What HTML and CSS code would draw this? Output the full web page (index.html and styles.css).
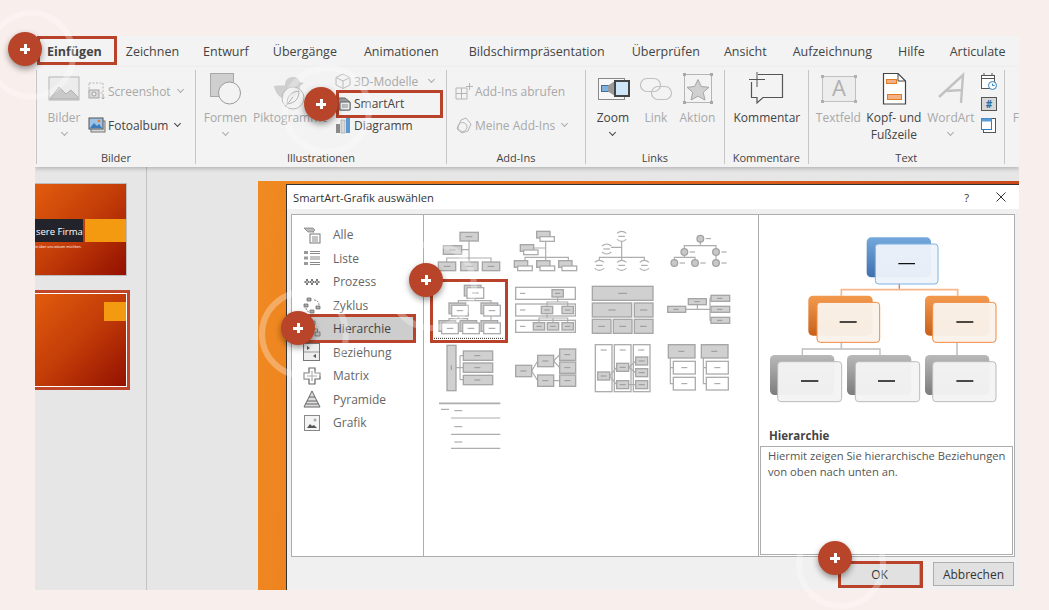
FILE: index.html
```html
<!DOCTYPE html>
<html lang="de">
<head>
<meta charset="UTF-8">
<meta name="viewport" content="width=device-width, initial-scale=1.0">
<title>SmartArt einfügen</title>
<link rel="stylesheet" href="styles.css">
</head>
<body>
<div class="page">
<div class="window">
  <div class="tabs">
    <span class="tab tab-active">Einfügen</span>
    <span class="tab">Zeichnen</span>
    <span class="tab">Entwurf</span>
    <span class="tab">Übergänge</span>
    <span class="tab">Animationen</span>
    <span class="tab">Bildschirmpräsentation</span>
    <span class="tab">Überprüfen</span>
    <span class="tab">Ansicht</span>
    <span class="tab">Aufzeichnung</span>
    <span class="tab">Hilfe</span>
    <span class="tab">Articulate</span>
  </div>

  <div class="ribbon">
    <div class="group group-bilder">
      <div class="group-body">
        <div class="big off w-bilder">
          <svg width="32" height="36" viewBox="0 0 32 36"><rect x="1" y="4" width="30" height="23" fill="#ececec" stroke="#b5b5b5"/><path d="M2 26 L11 14 L18 21 L23 17 L30 24 V26 Z" fill="#c9c9c9" stroke="#b0b0b0"/></svg>
          <span>Bilder</span>
          <i class="chev"></i>
        </div>
        <div class="stack stack-low">
          <div class="row off"><svg width="18" height="18" viewBox="0 0 18 18"><rect x="1" y="1" width="14" height="10" fill="none" stroke="#b5b5b5" stroke-dasharray="2 1.5"/><rect x="1" y="8" width="10" height="8" fill="#d8d8d8" stroke="#a8a8a8"/><circle cx="6" cy="12" r="2" fill="#f3f3f3" stroke="#a0a0a0"/><path d="M15 12v5M13.5 15.5 15 17l1.5-1.5" fill="none" stroke="#a8a8a8"/></svg><span>Screenshot</span><i class="chev"></i></div>
          <div class="row"><svg width="18" height="18" viewBox="0 0 18 18"><rect x="3" y="5" width="14" height="11" fill="#d8d8d8" stroke="#777"/><rect x="1" y="2" width="14" height="11" fill="#9cc3e6" stroke="#555"/><path d="M2 12 6 7l3 3 2-2 3 4Z" fill="#3d7ab8"/><circle cx="11" cy="5" r="1.3" fill="#e8792b"/></svg><span>Fotoalbum</span><i class="chev chev-dark"></i></div>
        </div>
      </div>
      <div class="group-label">Bilder</div>
    </div>

    <div class="group group-illu">
      <div class="group-body">
        <div class="big off w-formen">
          <svg width="43" height="36" viewBox="0 0 43 36"><rect x="6.5" y="0.5" width="23" height="23" fill="#cfcfcf" stroke="#a8a8a8"/><circle cx="25.5" cy="20" r="11" fill="#f3f3f3" stroke="#9a9a9a"/></svg>
          <span>Formen</span>
          <i class="chev"></i>
        </div>
        <div class="big off w-pikto">
          <svg width="79" height="36" viewBox="0 0 79 36"><path d="M23 13c5-1 9 0 11-1 0-5 3-8 8-8 4 0 6 2 7 5l4 1-4 3c0 8-6 13-13 13-7 0-12-6-13-13Z" fill="#cfcfcf"/><circle cx="42" cy="25" r="11" fill="#f3f3f3" fill-opacity=".8" stroke="#b8b8b8"/><path d="M36 31c0-8 4-12 12-13 0 8-4 12-12 13ZM34 34l8-10" fill="none" stroke="#b0b0b0"/></svg>
          <span>Piktogramme</span>
        </div>
        <div class="stack">
          <div class="row off"><svg width="18" height="18" viewBox="0 0 18 18"><path d="M9 2 16 5.5V13L9 16.5 2 13V5.5ZM2 5.5 9 9l7-3.5M9 9v7.5" fill="none" stroke="#bcbcbc"/></svg><span>3D-Modelle</span><i class="chev chev-far"></i></div>
          <div class="row"><svg width="18" height="18" viewBox="0 0 18 18"><path d="M2 4h9l5 4v8H2Z" fill="#9a9a9a" stroke="#666"/><rect x="6" y="8" width="10" height="8" rx="1" fill="#e9eef2" stroke="#666"/><path d="M8 11h6M8 13h6" stroke="#888"/></svg><span>SmartArt</span></div>
          <div class="row"><svg width="18" height="18" viewBox="0 0 18 18"><rect x="2" y="8" width="4" height="9" fill="#8a8a8a"/><rect x="7" y="4" width="4" height="13" fill="#d9d9d9" stroke="#888" stroke-width=".5"/><rect x="12" y="1" width="4" height="16" fill="#5b9bd5"/></svg><span>Diagramm</span></div>
        </div>
      </div>
      <div class="group-label">Illustrationen</div>
    </div>

    <div class="group group-addins">
      <div class="group-body">
        <div class="stack stack-low">
          <div class="row off"><svg width="18" height="18" viewBox="0 0 18 18"><path d="M1 6h11v11H1ZM1 11.500h11M6.500 6v11M14.500 1v7M11 4.500h7" fill="none" stroke="#b5b5b5"/></svg><span>Add-Ins abrufen</span></div>
          <div class="row off"><svg width="18" height="18" viewBox="0 0 18 18"><path d="M6 4 11 2l5 6-3 7-6 2-5-4Z" fill="none" stroke="#b5b5b5"/><circle cx="7.500" cy="11" r="4.500" fill="none" stroke="#b5b5b5"/></svg><span>Meine Add-Ins</span><i class="chev"></i></div>
        </div>
      </div>
      <div class="group-label">Add-Ins</div>
    </div>

    <div class="group group-links">
      <div class="group-body">
        <div class="big w-zoom">
          <svg width="34" height="36" viewBox="0 0 34 36"><rect x="2.500" y="5.500" width="26" height="21" fill="#f7f7f7" stroke="#8a8a8a"/><rect x="5.500" y="12.500" width="7" height="6" fill="#7fb2de" stroke="#3f6f9d"/><path d="M12 12.500 19 8V23L12 18.500Z" fill="#9a9a9a"/><rect x="19" y="8" width="14" height="15" fill="#cfe5f8" stroke="#444" stroke-width="2"/></svg>
          <span>Zoom</span>
          <i class="chev chev-dark"></i>
        </div>
        <div class="big off w-link">
          <svg width="34" height="36" viewBox="0 0 34 36"><rect x="1.500" y="5.500" width="20" height="13" rx="6.500" fill="none" stroke="#c0c0c0" stroke-width="1.200"/><rect x="12.500" y="13.500" width="20" height="13" rx="6.500" fill="none" stroke="#c0c0c0" stroke-width="1.200"/></svg>
          <span>Link</span>
        </div>
        <div class="big off w-aktion">
          <svg width="37" height="36" viewBox="0 0 37 36"><rect x="5.500" y="1.500" width="27" height="28" fill="#f3f3f3" stroke="#b5b5b5"/><path d="M19 6.500l3.300 7 7.700.8-5.700 5 1.600 7.700-6.900-3.900-6.900 3.900 1.600-7.700-5.700-5 7.700-.8Z" fill="#d0d0d0" stroke="#a5a5a5"/><path d="M4 0h3v3H4ZM31 0h3v3h-3ZM4 28h3v3H4ZM31 28h3v3h-3Z" fill="#a8a8a8"/></svg>
          <span>Aktion</span>
        </div>
      </div>
      <div class="group-label">Links</div>
    </div>

    <div class="group group-komm">
      <div class="group-body">
        <div class="big w-komm">
          <svg width="68" height="36" viewBox="0 0 68 36"><path d="M25 1.500H49.500V24.500H30L24 30V24.500H18.500V9" fill="none" stroke="#555" stroke-width="1.200"/><path d="M24 -1V14M16 6.500H32" stroke="#555" stroke-width="1"/></svg>
          <span>Kommentar</span>
        </div>
      </div>
      <div class="group-label">Kommentare</div>
    </div>

    <div class="group group-text">
      <div class="group-body">
        <div class="big off w-textfeld">
          <svg width="43" height="36" viewBox="0 0 43 36"><rect x="5.500" y="3.500" width="33" height="25" fill="#ededed" stroke="#c0c0c0"/><path d="M4 2h3v3H4ZM37 2h3v3h-3ZM4 27h3v3H4ZM37 27h3v3h-3Z" fill="#b0b0b0"/><text x="22" y="23" text-anchor="middle" class="svg-a">A</text></svg>
          <span>Textfeld</span>
        </div>
        <div class="big w-kopf">
          <svg width="58" height="36" viewBox="0 0 58 36"><path d="M18.500 .5H33L40.500 8V31H18.500Z" fill="#fff" stroke="#444" stroke-width="1.200"/><path d="M33 .5V8H40.500" fill="none" stroke="#444"/><rect x="21.500" y="6.500" width="10" height="4" fill="#f4b183" stroke="#e07b26"/><rect x="22.500" y="21.500" width="14" height="5" fill="#f4b183" stroke="#e07b26"/></svg>
          <span>Kopf- und<br>Fußzeile</span>
        </div>
        <div class="big off w-wordart">
          <svg width="48" height="36" viewBox="0 0 48 36"><path d="M12 24 36 2 34 30M20 18l15-1" fill="none" stroke="#c2c2c2" stroke-width="2.400"/></svg>
          <span>WordArt</span>
          <i class="chev"></i>
        </div>
        <div class="tiny-stack">
          <svg width="18" height="18" viewBox="0 0 18 18"><rect x="1.500" y="2.500" width="13" height="13" fill="#fff" stroke="#555"/><path d="M1.500 5.500h13M4 0v3M12 0v3" stroke="#555"/><circle cx="12.500" cy="12.500" r="4" fill="#fff" stroke="#2f7ec0"/><path d="M12.500 10.500v2h2" fill="none" stroke="#2f7ec0"/></svg>
          <svg width="18" height="18" viewBox="0 0 18 18"><rect x="1.500" y="2.500" width="15" height="13" fill="#d8d8d8" stroke="#555"/><text x="9" y="12.500" text-anchor="middle" class="svg-hash">#</text></svg>
          <svg width="18" height="18" viewBox="0 0 18 18"><rect x="3.500" y="1.500" width="12" height="14" fill="#fff" stroke="#555"/><rect x="1.500" y="1.500" width="10" height="11" fill="#fff" stroke="#2f7ec0"/><rect x="1.500" y="1.500" width="10" height="3" fill="#5b9bd5"/></svg>
        </div>
      </div>
      <div class="group-label">Text</div>
    </div>

    <div class="group-rest off"><span>F</span></div>
  </div>

  <div class="work">
    <div class="slides">
      <div class="thumb thumb-one">
        <div class="thumb-banner">
          <div class="thumb-title">sere Firma</div>
          <div class="thumb-accent"></div>
        </div>
        <div class="thumb-sub">ie über uns wissen möchten.</div>
      </div>
      <div class="thumb thumb-two">
        <div class="thumb-tag"></div>
      </div>
    </div>

    <div class="canvas">
      <div class="slide">
        <div class="dialog">
          <div class="dialog-title">
            <span class="dialog-name">SmartArt-Grafik auswählen</span>
            <span class="dialog-help">?</span>
            <svg class="dialog-close" width="10" height="10" viewBox="0 0 10 10"><path d="M.5.5l9 9M9.500.5l-9 9" stroke="#333" fill="none"/></svg>
          </div>

          <div class="panel">
            <div class="cats">
              <div class="cat"><svg width="18" height="18" viewBox="0 0 18 18"><path d="M1 2h9l2 2-2 2 1 0H5L3 4Z" fill="#bbb" stroke="#777" stroke-width=".7"/><rect x="7" y="8" width="10" height="9" fill="#fff" stroke="#777"/><path d="M9 11h6M9 13h6M9 15h6" stroke="#888"/></svg><span>Alle</span></div>
              <div class="cat"><svg width="18" height="18" viewBox="0 0 18 18"><path d="M1 2h4v3H1ZM1 7.500h4v3H1ZM1 13h4v3H1Z" fill="#999"/><path d="M7 2.500h10M7 4.500h10M7 8h10M7 10h10M7 13.500h10M7 15.500h10" stroke="#888"/></svg><span>Liste</span></div>
              <div class="cat"><svg width="18" height="18" viewBox="0 0 18 18"><path d="M1 9h16M3 6l3 3-3 3M8 6l3 3-3 3M13 6l3 3-3 3M5 6l-3 3 3 3M10 6 7 9l3 3M15 6l-3 3 3 3" fill="none" stroke="#777"/></svg><span>Prozess</span></div>
              <div class="cat"><svg width="18" height="18" viewBox="0 0 18 18"><path d="M4 2h4v3H4ZM1 8h4v3H1ZM13 10h4v3h-4ZM7 14h4v3H7Z" fill="#aaa" stroke="#666" stroke-width=".7"/><path d="M11 4c3 0 5 2 5 5M3 12c0 2 1 3 3 4" fill="none" stroke="#888" stroke-dasharray="2 1"/></svg><span>Zyklus</span></div>
              <div class="cat cat-on"><svg width="18" height="18" viewBox="0 0 18 18"><path d="M6 1h6v4H6ZM1 12h5v4H1ZM12 12h5v4h-5Z" fill="#bbb" stroke="#666" stroke-width=".7"/><path d="M9 5v4M3.500 12V9h11v3" fill="none" stroke="#777"/></svg><span>Hierarchie</span></div>
              <div class="cat"><svg width="18" height="18" viewBox="0 0 18 18"><rect x=".5" y=".5" width="16" height="17" fill="#eee" stroke="#777"/><path d="M1 9h15" stroke="#999"/><path d="M4 3v4l3-2ZM13 11v4l-3-2Z" fill="#555"/></svg><span>Beziehung</span></div>
              <div class="cat"><svg width="18" height="18" viewBox="0 0 18 18"><path d="M6 1h6v5h5v6h-5v5H6v-5H1V6h5Z" fill="#fff" stroke="#666" stroke-width="1.200"/><path d="M9 4v10M4 9h10" stroke="#888"/></svg><span>Matrix</span></div>
              <div class="cat"><svg width="18" height="18" viewBox="0 0 18 18"><path d="M9 1 17 17H1Z" fill="#ddd" stroke="#666"/><path d="M6 7h6M4 11h10M2.500 14h13" stroke="#666" stroke-width="1.200"/></svg><span>Pyramide</span></div>
              <div class="cat"><svg width="18" height="18" viewBox="0 0 18 18"><rect x="1.500" y="1.500" width="15" height="15" fill="#f4f4f4" stroke="#888"/><path d="M4 14l3-4 2 2 2-1 3 3Z" fill="#555"/><circle cx="12" cy="6" r="1.500" fill="#aaa"/></svg><span>Grafik</span></div>
            </div>

            <div class="gallery">
              <svg class="sa" viewBox="15 10 228 186"><path class="ln" d="M132 79V130M110 105H132M65 142V130H198V142M132 130V142"/><rect class="bx" x="105" y="53" width="55" height="26"/><rect class="bx" x="55" y="93" width="55" height="26"/><rect class="bx" x="40" y="142" width="52" height="26"/><rect class="bx" x="107" y="142" width="52" height="26"/><rect class="bx" x="172" y="142" width="52" height="26"/><path class="ds" d="M122 66h20M72 106h20M56 155h20M123 155h20M188 155h20"/></svg>
              <svg class="sa" viewBox="243 10 228 186"><path class="ln" d="M362 80V128M325 100H362M300 138V128H430V138M362 128V138"/><rect class="bx" x="335" y="50" width="40" height="20"/><rect class="wh" x="345" y="66" width="43" height="14"/><rect class="bx" x="286" y="90" width="40" height="20"/><rect class="wh" x="296" y="106" width="43" height="14"/><rect class="bx" x="268" y="138" width="40" height="20"/><rect class="wh" x="278" y="154" width="44" height="14"/><rect class="bx" x="335" y="138" width="40" height="20"/><rect class="wh" x="345" y="154" width="44" height="14"/><rect class="bx" x="401" y="138" width="40" height="20"/><rect class="wh" x="411" y="154" width="44" height="14"/></svg>
              <svg class="sa" viewBox="471 10 228 186"><path class="ln" d="M590 80V128M558 98H590M523 138V128H658V138M590 128V138"/><path class="ln" d="M576 56Q590 44 604 56M576 74Q590 86 604 74M531 94Q545 82 559 94M531 112Q545 124 559 112M509 143Q523 131 537 143M509 161Q523 173 537 161M576 143Q590 131 604 143M576 161Q590 173 604 161M644 143Q658 131 672 143M644 161Q658 173 672 161"/><path class="ds" d="M580 65h20M535 103h20M513 152h20M580 152h20M648 152h20"/></svg>
              <svg class="sa" viewBox="699 10 228 186"><path class="ln" d="M826 82V93M778 102V93H873V102M778 122V128M748 135V128H810V135M873 122V135"/><g class="cr"><circle cx="826" cy="72" r="10"/><circle cx="778" cy="112" r="10"/><circle cx="873" cy="112" r="10"/><circle cx="748" cy="145" r="10"/><circle cx="810" cy="145" r="10"/><circle cx="873" cy="145" r="10"/></g><path class="ds" d="M842 72h16M794 112h16M889 112h16M764 145h16M826 145h16M889 145h16"/></svg>

              <svg class="sa sa-on" viewBox="15 196 228 186"><path class="ln" d="M150 250V258M100 265V258H198V265M100 305V312M72 318V312H128V318M198 305V318"/><rect class="bx" x="118" y="212" width="50" height="32"/><rect class="wh" x="126" y="219" width="50" height="32"/><rect class="bx" x="72" y="265" width="50" height="32"/><rect class="wh" x="80" y="272" width="50" height="32"/><rect class="bx" x="168" y="265" width="50" height="32"/><rect class="wh" x="176" y="272" width="50" height="32"/><rect class="bx" x="42" y="318" width="50" height="32"/><rect class="wh" x="50" y="325" width="50" height="32"/><rect class="bx" x="105" y="318" width="50" height="32"/><rect class="wh" x="113" y="325" width="50" height="32"/><rect class="bx" x="168" y="318" width="50" height="32"/><rect class="wh" x="176" y="325" width="50" height="32"/><path class="ds" d="M141 235h20M95 288h20M191 288h20M65 341h20M128 341h20M191 341h20"/><path class="dots" d="M27 371H237"/></svg>
              <svg class="sa" viewBox="243 196 228 186"><rect class="wh" x="272" y="218" width="179" height="36"/><rect class="wh" x="272" y="268" width="179" height="36"/><rect class="wh" x="272" y="317" width="179" height="36"/><path class="ln" d="M398 247V262M366 275V262H428V275M366 297V310M342 324V310H428V324M384 310V324"/><rect class="bx" x="381" y="225" width="34" height="22"/><rect class="bx" x="349" y="275" width="34" height="22"/><rect class="bx" x="411" y="275" width="34" height="22"/><rect class="bx" x="325" y="324" width="34" height="22"/><rect class="bx" x="367" y="324" width="34" height="22"/><rect class="bx" x="411" y="324" width="34" height="22"/><path class="ds" d="M285 236h16M285 286h16M285 335h16M390 236h16M358 286h16M420 286h16M334 335h16M376 335h16M420 335h16"/></svg>
              <svg class="sa" viewBox="471 196 228 186"><rect class="bx" x="502" y="215" width="182" height="42"/><rect class="bx" x="502" y="265" width="118" height="42"/><rect class="bx" x="628" y="265" width="56" height="42"/><rect class="bx" x="502" y="314" width="56" height="42"/><rect class="bx" x="565" y="314" width="56" height="42"/><rect class="bx" x="628" y="314" width="56" height="42"/><path class="ds" d="M580 236h26M550 286h22M645 286h22M520 335h20M583 335h20M645 335h20"/></svg>
              <svg class="sa" viewBox="699 196 228 186"><path class="ln" d="M782 284H855M817 270V284M855 250V318M855 250H858M855 318H858"/><rect class="bx" x="728" y="275" width="54" height="18"/><rect class="bx" x="790" y="252" width="54" height="18"/><rect class="bx" x="858" y="242" width="56" height="18"/><rect class="bx" x="858" y="275" width="56" height="18"/><rect class="bx" x="858" y="308" width="56" height="18"/><path class="ds" d="M745 284h16M808 261h16M876 251h16M876 284h16M876 317h16"/></svg>

              <svg class="sa" viewBox="15 382 228 186"><path class="ln" d="M93 459H115M105 423V495M105 423H115M105 495H115"/><rect class="bx" x="66" y="392" width="27" height="136"/><rect class="bx" x="115" y="409" width="88" height="28"/><rect class="bx" x="115" y="445" width="88" height="28"/><rect class="bx" x="115" y="482" width="88" height="28"/><path class="ds" d="M148 423h18M148 459h18M148 496h18M79 452v14"/></svg>
              <svg class="sa" viewBox="243 382 228 186"><path class="ln" d="M320 469 338 439M320 469 338 498M386 439 404 420M386 439 404 459M386 498H404"/><rect class="bx" x="272" y="452" width="48" height="34"/><rect class="bx" x="338" y="422" width="48" height="34"/><rect class="bx" x="338" y="481" width="48" height="34"/><rect class="bx" x="404" y="403" width="48" height="34"/><rect class="bx" x="404" y="442" width="48" height="34"/><rect class="bx" x="404" y="481" width="48" height="34"/><path class="ds" d="M286 469h18M352 439h18M352 498h18M418 420h18M418 459h18M418 498h18"/></svg>
              <svg class="sa" viewBox="471 382 228 186"><rect class="wh" x="511" y="390" width="50" height="141"/><rect class="wh" x="568" y="390" width="50" height="141"/><rect class="wh" x="625" y="390" width="50" height="141"/><path class="ln" d="M554 484 575 458M554 484 575 510M611 458 632 439M611 458 632 474M611 510H632"/><rect class="bx" x="518" y="472" width="36" height="24"/><rect class="bx" x="575" y="446" width="36" height="24"/><rect class="bx" x="575" y="498" width="36" height="24"/><rect class="bx" x="632" y="427" width="36" height="24"/><rect class="bx" x="632" y="462" width="36" height="24"/><rect class="bx" x="632" y="498" width="36" height="24"/><path class="ds" d="M527 406h18M584 406h18M640 406h18M527 484h18M584 458h18M584 510h18M641 439h18M641 474h18M641 510h18"/></svg>
              <svg class="sa" viewBox="699 382 228 186"><path class="ln" d="M736 430V507H745M736 459H745M835 430V507H844M835 459H844"/><rect class="bx" x="730" y="390" width="80" height="40"/><rect class="bx" x="829" y="390" width="80" height="40"/><rect class="wh" x="745" y="440" width="66" height="38"/><rect class="wh" x="745" y="488" width="66" height="38"/><rect class="wh" x="844" y="440" width="66" height="38"/><rect class="wh" x="844" y="488" width="66" height="38"/><path class="ds" d="M760 410h18M859 410h18M769 459h18M868 459h18M769 507h18M868 507h18"/></svg>

              <svg class="sa" viewBox="15 568 228 186"><path class="ln ln-thick" d="M42 566H226"/><path class="ln" d="M78 610H226M78 659H226M78 701H226"/><path class="ds" d="M48 584h24M88 588h24M88 636h24M88 682h24"/></svg>
            </div>

            <div class="preview">
              <svg class="preview-art" viewBox="15 0 768 630">
                <defs>
                  <linearGradient id="gb" x1="0" y1="0" x2="0" y2="1"><stop offset="0" stop-color="#75a8dc"/><stop offset="1" stop-color="#3f6fae"/></linearGradient>
                  <linearGradient id="go" x1="0" y1="0" x2="0" y2="1"><stop offset="0" stop-color="#f39a4e"/><stop offset="1" stop-color="#c9601a"/></linearGradient>
                  <linearGradient id="gg" x1="0" y1="0" x2="0" y2="1"><stop offset="0" stop-color="#b9b9b9"/><stop offset="1" stop-color="#7d7d7d"/></linearGradient>
                </defs>
                <path d="M433 207V224" stroke="#ed7d31" stroke-width="4" fill="none"/>
                <path d="M259 242V224H608V242" stroke="#f7b78a" stroke-width="5" fill="none"/>
                <path d="M259 382V402M606 382V420" stroke="#c4c4c4" stroke-width="5" fill="none"/>
                <path d="M142 420V402H375V420" stroke="#bdbdbd" stroke-width="4" fill="none"/>
                <rect x="335" y="67" width="193" height="120" rx="14" fill="url(#gb)"/>
                <rect x="361" y="87" width="188" height="120" rx="10" fill="#eef3fa" fill-opacity=".96" stroke="#7cb4e6" stroke-width="3"/>
                <rect x="160" y="242" width="193" height="120" rx="14" fill="url(#go)"/>
                <rect x="186" y="262" width="188" height="120" rx="10" fill="#faf2ea" fill-opacity=".96" stroke="#f08a3e" stroke-width="3"/>
                <rect x="510" y="242" width="193" height="120" rx="14" fill="url(#go)"/>
                <rect x="533" y="262" width="190" height="120" rx="10" fill="#faf2ea" fill-opacity=".96" stroke="#f08a3e" stroke-width="3"/>
                <rect x="45" y="420" width="193" height="120" rx="14" fill="url(#gg)"/>
                <rect x="68" y="440" width="192" height="120" rx="10" fill="#f4f4f4" fill-opacity=".96" stroke="#bbb" stroke-width="3"/>
                <rect x="276" y="420" width="193" height="120" rx="14" fill="url(#gg)"/>
                <rect x="301" y="440" width="193" height="120" rx="10" fill="#f4f4f4" fill-opacity=".96" stroke="#bbb" stroke-width="3"/>
                <rect x="510" y="420" width="193" height="120" rx="14" fill="url(#gg)"/>
                <rect x="533" y="440" width="190" height="120" rx="10" fill="#f4f4f4" fill-opacity=".96" stroke="#bbb" stroke-width="3"/>
                <path d="M430 146h50M254 321h51M604 321h51M138 498h52M369 498h51M604 498h51" stroke="#111" stroke-width="4" fill="none"/>
              </svg>
              <div class="preview-name">Hierarchie</div>
              <div class="preview-text">Hiermit zeigen Sie hierarchische Beziehungen von oben nach unten an.</div>
            </div>
          </div>

          <div class="dialog-foot">
            <button class="btn btn-ok">OK</button>
            <button class="btn">Abbrechen</button>
          </div>
        </div>
      </div>
    </div>
  </div>
</div>

<!-- Markierungen -->
<div class="mark mark-tab"></div>
<div class="mark mark-smart"></div>
<div class="mark mark-cat"></div>
<div class="mark mark-thumb"></div>
<div class="mark mark-ok"></div>
<div class="pin pin-tab"></div>
<div class="pin pin-smart"></div>
<div class="pin pin-thumb"></div>
<div class="pin pin-cat"></div>
<div class="pin pin-ok"></div>
</div>
</body>
</html>
```

FILE: styles.css
```css
* {
    box-sizing: border-box;
}

body {
    margin: 0;
    font-family: "Open Sans", "Noto Sans", sans-serif;
    color: #444;
}

.page {
    position: relative;
    width: 1049px;
    height: 610px;
    padding: 36px 30px 20px 35px;
    background-color: #f8eeeb;
    overflow: hidden;
}

.window {
    display: flex;
    flex-direction: column;
    height: 554px;
    overflow: hidden;
    background-color: #f3f3f3;
}

/* Tabs */
.tabs {
    display: flex;
    align-items: center;
    gap: 24px;
    height: 31px;
    padding-left: 12px;
    font-size: 12.5px;
    white-space: nowrap;
    flex-shrink: 0;
}

.tab-active {
    font-weight: 700;
}

.tab:nth-child(5) {
    margin-left: 3px;
}

.tab:nth-child(6) {
    margin-left: 6px;
}

.tab:nth-child(7) {
    margin-left: 3px;
}

.tab:nth-child(9),
.tab:nth-child(10) {
    margin-left: 2px;
}

.tab:nth-child(11) {
    margin-left: 1px;
}

/* Ribbon */
.ribbon {
    display: flex;
    height: 100px;
    padding-left: 1px;
    flex-shrink: 0;
    font-size: 12px;
    white-space: nowrap;
    position: relative;
    box-shadow: 0 2px 4px rgba(0, 0, 0, 0.2);
}

.group {
    display: flex;
    flex-direction: column;
    margin: 3px 0;
    border-right: 1px solid #c6c6c6;
}

.group-bilder {
    width: 160px;
    border-left: 1px solid #c6c6c6;
}

.group-illu {
    width: 251px;
}

.group-addins {
    width: 139px;
}

.group-links {
    width: 139px;
}

.group-komm {
    width: 84px;
}

.group-text {
    width: 196px;
}

.group-rest {
    padding: 42px 0 0 8px;
}

.group-body {
    display: flex;
    flex: 1;
    padding-top: 3px;
}

.group-label {
    height: 12px;
    line-height: 12px;
    text-align: center;
    font-size: 11px;
}

.off {
    color: #a8a8a8;
}

.big {
    display: flex;
    flex-direction: column;
    align-items: center;
    line-height: 17px;
    text-align: center;
}

.big svg {
    display: block;
    flex-shrink: 0;
    overflow: visible;
}

.w-bilder {
    width: 32px;
    margin-left: 11px;
}

.w-formen {
    width: 43px;
    margin-left: 8px;
}

.w-pikto {
    width: 79px;
    margin-left: 4px;
}

.w-zoom {
    width: 34px;
    margin-left: 10px;
}

.w-link {
    width: 34px;
    margin-left: 9px;
}

.w-aktion {
    width: 37px;
    margin-left: 6px;
}

.w-komm {
    width: 68px;
    margin-left: 8px;
}

.w-textfeld {
    width: 43px;
    margin-left: 8px;
}

.w-kopf {
    width: 58px;
    margin-left: 5px;
}

.w-wordart {
    width: 48px;
    margin-left: 4px;
}

.tiny-stack {
    display: flex;
    flex-direction: column;
    gap: 4px;
    margin-left: 5px;
}

.stack {
    display: flex;
    flex-direction: column;
    margin-left: 4px;
    margin-top: -3px;
    flex: 1;
}

.stack-low {
    gap: 12px;
    margin-top: 7px;
    margin-left: 8px;
}

.row {
    display: flex;
    align-items: center;
    gap: 2px;
    height: 22px;
}

.group-addins .stack {
    margin-left: 8px;
}

.chev {
    display: inline-block;
    width: 5px;
    height: 5px;
    margin: 0 0 3px 5px;
    border-right: 1px solid #aaa;
    border-bottom: 1px solid #aaa;
    transform: rotate(45deg);
}

.big .chev {
    margin: 4px 0 0;
}

.chev-dark {
    border-color: #444;
}

.chev-far {
    margin-left: 9px;
}

.svg-a {
    font-size: 22px;
    fill: #b0b0b0;
}

.svg-hash {
    font-size: 10px;
    font-weight: 700;
    fill: #2f6ea5;
}

/* Work area */
.work {
    display: flex;
    flex: 1;
    min-height: 0;
    background-color: #e6e6e6;
}

.slides {
    width: 112px;
    padding-top: 16px;
    border-right: 1px solid #c2c2c2;
    flex-shrink: 0;
}

.thumb {
    background: linear-gradient(135deg, #e25c0e 0%, #c23c08 50%, #931000 100%);
}

.thumb-one {
    width: 92px;
    height: 93px;
    padding-top: 35px;
    border: 1px solid #bbb;
    border-left: none;
}

.thumb-banner {
    display: flex;
    gap: 2px;
    height: 23px;
}

.thumb-title {
    width: 48px;
    padding-left: 1px;
    line-height: 26px;
    font-size: 9.5px;
    color: #fff;
    white-space: nowrap;
    background-color: #23242b;
}

.thumb-accent {
    flex: 1;
    background-color: #f39a10;
}

.thumb-sub {
    margin-top: 2px;
    font-size: 3.5px;
    color: #fff;
    white-space: nowrap;
}

.thumb-two {
    display: flex;
    justify-content: flex-end;
    width: 95px;
    height: 100px;
    margin-top: 14px;
    padding-top: 9px;
    border: 3px solid #bf452b;
    border-left: none;
    box-shadow: inset -1px -1px 0 #fff, inset 0 1px 0 #fff;
}

.thumb-tag {
    width: 22px;
    height: 19px;
    margin-right: 1px;
    background-color: #f39a10;
}

.canvas {
    display: flex;
    flex: 1;
    min-width: 0;
    padding: 14px 0 0 111px;
}

.slide {
    display: flex;
    flex: 1;
    min-width: 0;
    padding: 3px 0 0 28px;
    background: linear-gradient(95deg, #f08a22 0, #e8711a 30%, #c8451a 100%);
}

/* Dialog */
.dialog {
    display: flex;
    flex-direction: column;
    flex: 1;
    min-width: 0;
    background-color: #f0f0f0;
    border: 1px solid #333;
    border-width: 1px 0 0 1px;
}

.dialog-title {
    display: flex;
    align-items: center;
    height: 24px;
    padding: 0 13px 0 6px;
    background-color: #fff;
    font-size: 11.2px;
    color: #333;
    flex-shrink: 0;
}

.dialog-name {
    flex: 1;
}

.dialog-help {
    margin-right: 27px;
}

.panel {
    display: grid;
    grid-template-columns: 132px 334px 1fr;
    flex: 1;
    min-height: 0;
    margin: 5px 4px 0 4px;
    background-color: #fff;
    border: 1px solid #adadad;
}

.cats {
    padding: 8px 10px 0 11px;
    border-right: 1px solid #adadad;
}

.cat {
    display: flex;
    align-items: center;
    gap: 12px;
    height: 23.5px;
    font-size: 12px;
    color: #666;
}

.cat-on {
    background-color: #cdcdcd;
    color: #444;
}

.gallery {
    display: grid;
    grid-template-columns: repeat(4, 76px);
    grid-auto-rows: 62px;
    padding: 3px 0 0 6px;
}

.sa {
    display: block;
    width: 76px;
    height: 62px;
    overflow: visible;
}

.sa rect {
    stroke-width: 4;
}

.bx {
    fill: #d0d0d0;
    stroke: #a6a6a6;
}

.wh {
    fill: #fff;
    stroke: #adadad;
}

.ln {
    fill: none;
    stroke: #adadad;
    stroke-width: 3.5;
}

.ln-thick {
    stroke-width: 5;
}

.ds {
    fill: none;
    stroke: #8a8a8a;
    stroke-width: 2.5;
}

.cr circle {
    fill: #c8c8c8;
    stroke: #a3a3a3;
    stroke-width: 4;
}

.dots {
    fill: none;
    stroke: #222;
    stroke-width: 3;
    stroke-dasharray: 3 3;
}

.preview {
    display: flex;
    flex-direction: column;
    min-width: 0;
    border-left: 1px solid #adadad;
    padding: 0 1px 1px 1px;
}

.preview-art {
    display: block;
    width: 256px;
    height: 210px;
    flex-shrink: 0;
}

.preview-name {
    padding-left: 9px;
    line-height: 21px;
    font-size: 11.5px;
    font-weight: 700;
}

.preview-text {
    flex: 1;
    padding: 1px 0 1px 7px;
    border: 1px solid #adadad;
    line-height: 16px;
    font-size: 11.2px;
    color: #555;
}

.dialog-foot {
    display: flex;
    justify-content: flex-end;
    gap: 13px;
    height: 33px;
    padding: 5px 5px 0 0;
    flex-shrink: 0;
}

.btn {
    width: 81px;
    height: 24px;
    padding: 0;
    border: 1px solid #adadad;
    background-color: #e1e1e1;
    font-family: inherit;
    font-size: 12px;
    color: #333;
}

/* Overlay */
.mark {
    position: absolute;
    border: 3px solid #b8432a;
}

.mark-tab {
    left: 37px;
    top: 36px;
    width: 80px;
    height: 29px;
}

.mark-smart {
    left: 336px;
    top: 90px;
    width: 107px;
    height: 28px;
}

.mark-cat {
    left: 306px;
    top: 314px;
    width: 110px;
    height: 29px;
}

.mark-thumb {
    left: 430px;
    top: 279px;
    width: 78px;
    height: 64px;
}

.mark-ok {
    left: 838px;
    top: 561px;
    width: 85px;
    height: 27px;
}

.pin {
    position: absolute;
    width: 34px;
    height: 34px;
    border-radius: 50%;
    background-color: #b8442a;
    box-shadow: 0 3px 6px rgba(0, 0, 0, 0.4);
}

.pin::before {
    content: "";
    position: absolute;
    left: -22px;
    top: -22px;
    width: 78px;
    height: 78px;
    border: 6px solid rgba(255, 255, 255, 0.3);
    border-radius: 50%;
}

.pin::after {
    content: "";
    position: absolute;
    left: 12px;
    top: 12px;
    width: 10px;
    height: 10px;
    background:
        linear-gradient(#fff, #fff) center / 10px 3px no-repeat,
        linear-gradient(#fff, #fff) center / 3px 10px no-repeat;
}

.pin-tab {
    left: 8px;
    top: 32px;
}

.pin-smart {
    left: 304px;
    top: 87px;
}

.pin-thumb {
    left: 409px;
    top: 263px;
}

.pin-cat {
    left: 281px;
    top: 311px;
}

.pin-ok {
    left: 818px;
    top: 541px;
}
```
